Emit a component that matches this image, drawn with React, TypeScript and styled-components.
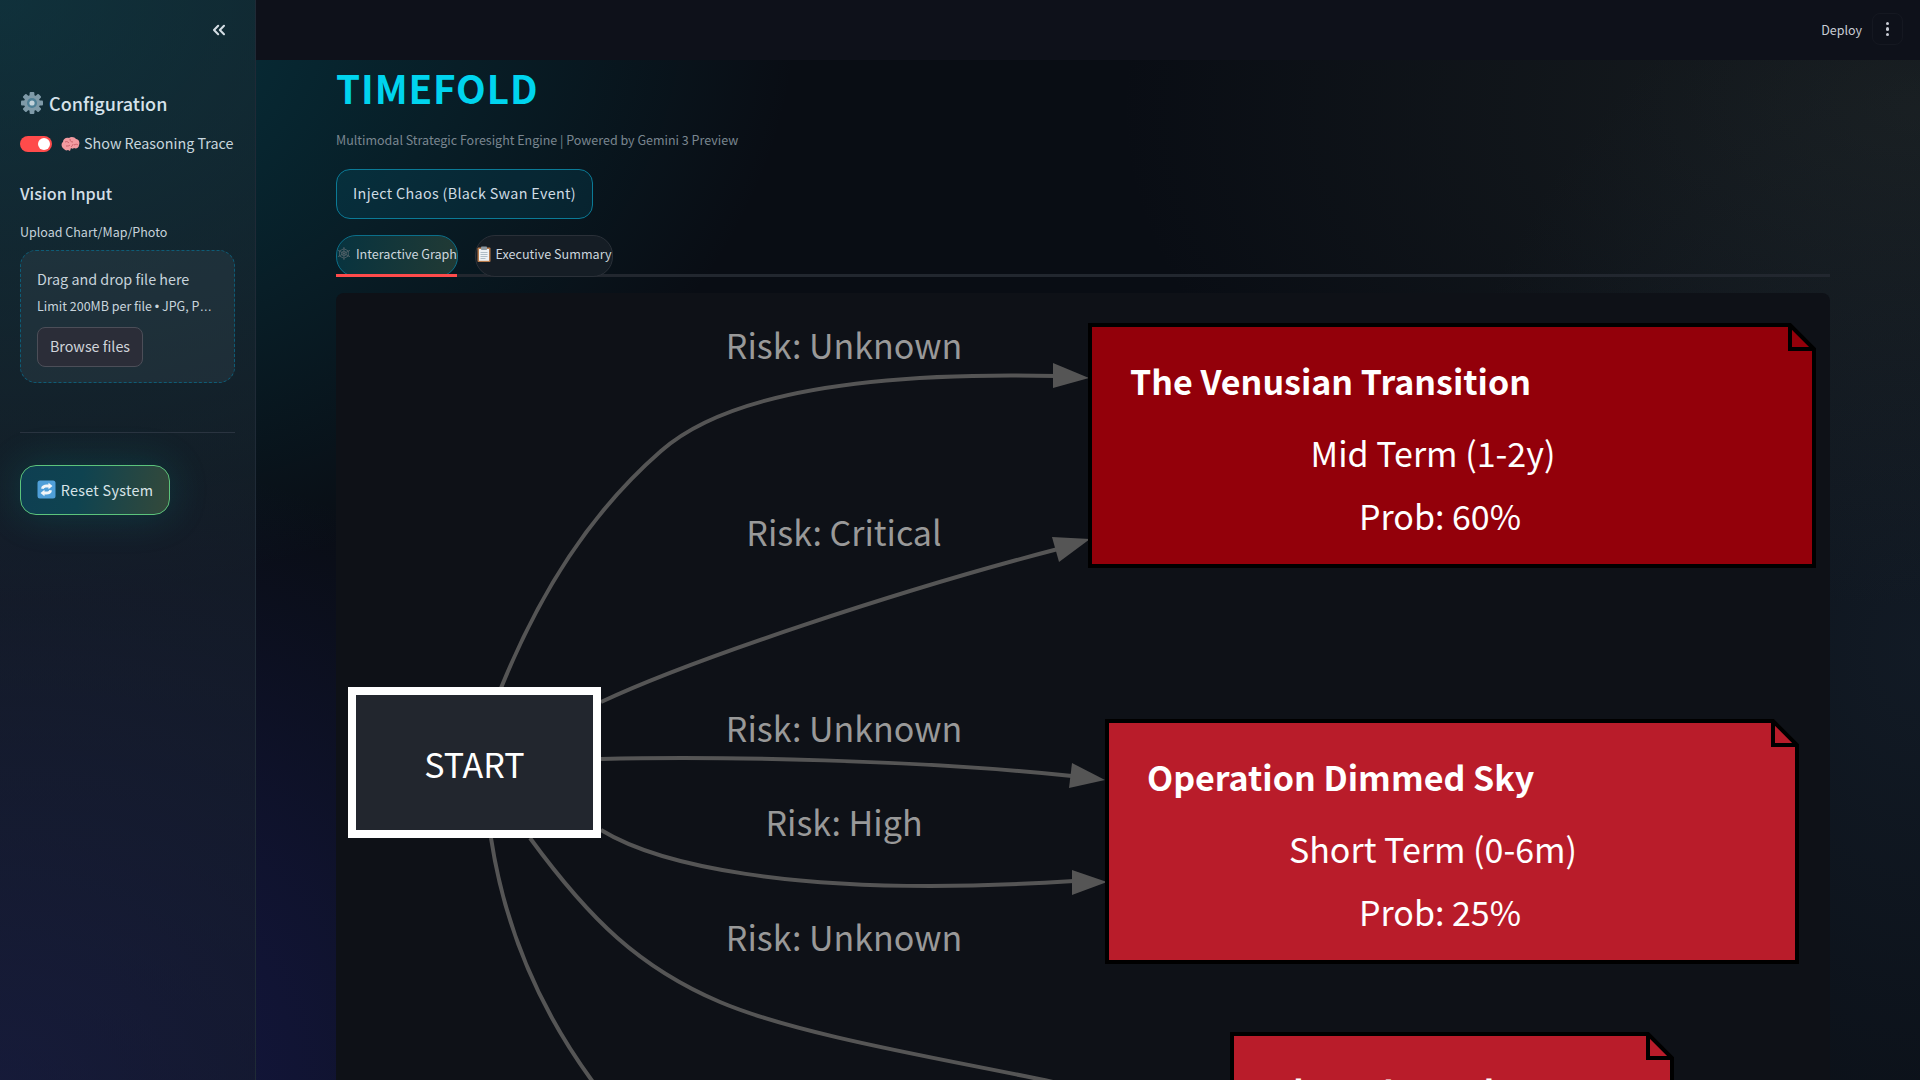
import React from "react";
import styled, { createGlobalStyle } from "styled-components";
import { ChevronsLeft } from "lucide-react";

const Global = createGlobalStyle`
  html, body { margin: 0; padding: 0; height: 100%; overflow: hidden; }
  body {
    font-family: "Noto Sans CJK SC", "Noto Sans", sans-serif;
    background-color: #090d14;
    background-image:
      radial-gradient(ellipse 800px 600px at 0% 0%, rgba(0, 120, 140, 0.38), transparent 100%),
      radial-gradient(ellipse 760px 640px at 0% 100%, rgba(45, 45, 165, 0.36), transparent 100%),
      radial-gradient(ellipse 800px 500px at 100% 10%, rgba(70, 80, 70, 0.24), transparent 100%),
      radial-gradient(ellipse 500px 700px at 100% 60%, rgba(40, 60, 80, 0.28), transparent 100%);
  }
  * { box-sizing: border-box; }
`;

const Shell = styled.div`
  display: flex;
  height: 100vh;
  overflow: hidden;
`;

const Sidebar = styled.aside`
  width: 256px;
  flex: none;
  padding: 0 20px;
  display: flex;
  flex-direction: column;
  border-right: 1px solid #1f2a36;
  background: linear-gradient(180deg, rgba(26, 44, 52, 0.5) 0%, rgba(28, 40, 50, 0.55) 35%, rgba(22, 28, 44, 0.55) 100%);
`;

const CollapseRow = styled.div`
  height: 60px;
  display: flex;
  align-items: center;
  justify-content: flex-end;
  padding-right: 6px;
  color: #d4dde4;
  margin-bottom: 26px;
`;

const SideTitle = styled.h2`
  margin: 0;
  display: flex;
  align-items: center;
  gap: 5px;
  height: 34px;
  font-size: 18px;
  line-height: 32px;
  font-weight: 500;
  color: #d6e2ea;
`;

const ToggleRow = styled.div`
  margin-top: 12px;
  height: 24px;
  display: flex;
  align-items: center;
  font-size: 14.350px;
  line-height: 22px;
  white-space: nowrap;
  color: #c8d6de;
`;

const ToggleText = styled.span`
  margin-bottom: 2px;
`;

const Toggle = styled.span`
  width: 32px;
  height: 16px;
  border-radius: 8px;
  background: #ff4b4b;
  display: flex;
  align-items: center;
  justify-content: flex-end;
  padding-right: 2px;
  margin-right: 9px;
`;

const Knob = styled.span`
  width: 12px;
  height: 12px;
  border-radius: 50%;
  background: #fff;
`;

const SectionTitle = styled.h3`
  margin: 24px 0 0;
  font-size: 16.200px;
  line-height: 26px;
  height: 28px;
  font-weight: 500;
  color: #d2dee6;
`;

const FieldLabel = styled.div`
  margin-top: 14px;
  font-size: 12.500px;
  line-height: 19px;
  height: 20px;
  color: #c6d2da;
`;

const Dropzone = styled.div`
  margin-top: 8px;
  width: 215px;
  height: 133px;
  padding: 16px 16px 0 16px;
  border: 1px dashed #0e5c76;
  border-radius: 16px;
  background: rgba(60, 80, 90, 0.28);
  color: #c8d4dc;
`;

const DropHeading = styled.div`
  font-size: 14.350px;
  line-height: 23px;
  height: 24px;
`;

const DropHint = styled.div`
  margin-top: 5px;
  font-size: 12.500px;
  line-height: 19px;
  height: 20px;
  white-space: nowrap;
`;

const LatinMark = styled.span`
  font-family: "Liberation Sans", sans-serif;
`;

const BrowseButton = styled.div`
  margin-top: 11px;
  width: 106px;
  height: 40px;
  border: 1px solid #4c4e58;
  border-radius: 8px;
  background: #2b2d38;
  font-size: 14.350px;
  line-height: 36px;
  text-align: center;
  color: #d0d4da;
`;

const Divider = styled.hr`
  margin: 49px 0 32px;
  border: 0;
  border-top: 1px solid #2a3440;
  width: 215px;
`;

const ResetButton = styled.div`
  width: 150px;
  height: 50px;
  padding-bottom: 2px;
  border: 1px solid #5cc47c;
  border-radius: 16px;
  display: flex;
  align-items: center;
  justify-content: center;
  gap: 5px;
  font-size: 14.350px;
  letter-spacing: 0.300px;
  color: #d8e4e8;
  background: linear-gradient(100deg, #0e3f52 0%, #0f4350 40%, #34493a 100%);
  box-shadow: 0 0 40px rgba(0, 180, 170, 0.2);
`;

const Main = styled.main`
  flex: 1;
  min-width: 0;
  display: flex;
  flex-direction: column;
`;

const Header = styled.header`
  height: 60px;
  flex: none;
  padding: 0 17px 2px 0;
  background: #0e111a;
  display: flex;
  align-items: center;
  justify-content: flex-end;
  font-size: 12.500px;
  color: #c8ccd4;
`;

const KebabButton = styled.div`
  width: 31px;
  height: 32px;
  margin-left: 10px;
  border: 1px solid #151821;
  border-radius: 8px;
  display: flex;
  flex-direction: column;
  align-items: center;
  justify-content: center;
  gap: 2px;
`;

const Dot = styled.span`
  width: 3.500px;
  height: 3.500px;
  border-radius: 50%;
  background: #c8ccd4;
`;

const Content = styled.div`
  flex: 1;
  min-height: 0;
  padding: 0 90px 0 80px;
  display: flex;
  flex-direction: column;
`;

const Title = styled.h1`
  margin: 0;
  height: 56px;
  font-size: 38.600px;
  line-height: 54px;
  font-weight: 700;
  letter-spacing: 0.900px;
  color: #00d4ee;
`;

const Subtitle = styled.div`
  margin-top: 14px;
  font-size: 12.500px;
  line-height: 20px;
  color: #7a8690;
`;

const ChaosButton = styled.div`
  margin-top: 19px;
  width: 257px;
  height: 50px;
  border: 1px solid #0b7a96;
  border-radius: 14px;
  background: rgba(0, 150, 190, 0.12);
  font-size: 14.350px;
  letter-spacing: 0.330px;
  line-height: 46px;
  text-align: center;
  color: #d0dce4;
`;

const TabBar = styled.div`
  margin-top: 16px;
  height: 42px;
  display: flex;
  gap: 17px;
  border-bottom: 3px solid #22272f;
`;

const Tab = styled.div<{ $active?: boolean }>`
  height: 42px;
  width: ${(p) => (p.$active ? "122px" : "138px")};
  padding-bottom: 5px;
  border-radius: 20px;
  border: 1px solid ${(p) => (p.$active ? "#0b6f8a" : "#2a3038")};
  background: ${(p) => (p.$active ? "linear-gradient(100deg, #07333f, #223a34)" : "#151d25")};
  display: flex;
  align-items: center;
  justify-content: center;
  gap: 5px;
  font-size: 12.600px;
  white-space: nowrap;
  color: #ccd6de;
  position: relative;
  &::after {
    content: "";
    display: ${(p) => (p.$active ? "block" : "none")};
    position: absolute;
    left: -1px;
    right: 0;
    bottom: -1px;
    height: 3px;
    background: #ff4b4b;
  }
`;

const GraphCard = styled.div`
  margin-top: 16px;
  flex: 1;
  min-height: 0;
  border-radius: 8px 8px 0 0;
  background: #0e1117;
  overflow: hidden;
`;

const GraphSvg = styled.svg`
  display: block;
  font-family: "Noto Sans CJK SC", "Noto Sans", sans-serif;
`;

const EdgeLabel = styled.text`
  font-size: 34px;
  fill: #999;
  text-anchor: middle;
`;

const NodeHeading = styled.text`
  font-size: 34px;
  font-weight: 700;
  fill: #fff;
`;

const NodeLine = styled.text`
  font-size: 34px;
  fill: #fff;
  text-anchor: middle;
`;

const Gear = () => (
  <svg width="24" height="24" viewBox="0 0 24 24">
    <g fill="#7f9aa8">
      {[0, 45, 90, 135, 180, 225, 270, 315].map((a) => (
        <rect key={a} x="9.600" y="1" width="4.800" height="6" rx="1" transform={`rotate(${a} 12 12)`} />
      ))}
      <circle cx="12" cy="12" r="8" />
    </g>
    <circle cx="12" cy="12" r="5" fill="#4e7f95" />
    <circle cx="12" cy="12" r="2.600" fill="#c2d2da" />
  </svg>
);

const Brain = () => (
  <svg width="19" height="16" viewBox="0 0 19 16" style={{ marginRight: 4 }}>
    <path d="M3 13C0 11 0 7 2 6 2 3 5 1 8 2c2-2 6-1 7 1 3 0 4 4 3 6 0 3-3 4-5 3-1 1-2 1-3 0l-1 3-2-1c-2 1-3 0-4-1z" fill="#f29aa0" />
    <path d="M4 6c2-1 3 0 4 1M9 3c0 2 1 3 3 3M13 9c2-1 3-1 4 0M5 10c2 0 3 0 4-1M10 11c1-1 2-2 2-3" stroke="#c9606a" strokeWidth="1" fill="none" />
  </svg>
);

const Refresh = () => (
  <svg width="19" height="19" viewBox="0 0 19 19">
    <rect x="0.500" y="0.500" width="18" height="18" rx="2.500" fill="#4f9fd8" />
    <path d="M4 8.500C4.500 5.500 7 4.500 9.500 4.500h2V2.800L15.500 6l-4 3.200V7.500h-2C8 7.500 7 8 6.700 9z" fill="#f2f6f8" />
    <path d="M15 10.500c-.5 3-3 4-5.500 4h-2v1.700L3.500 13l4-3.200v1.700h2c1.500 0 2.500-.5 2.800-1.500z" fill="#f2f6f8" />
  </svg>
);

const Web = () => (
  <svg width="15" height="15" viewBox="0 0 16 16" fill="none" stroke="#59666c" strokeWidth="0.900">
    <path d="M8 0.500V15.500M1 4.300L15 11.700M1 11.700L15 4.300" />
    <path d="M8 2.500L13 5 13 11 8 13.500 3 11 3 5zM8 5.200L10.600 6.500V9.500L8 10.800 5.400 9.500V6.500z" />
  </svg>
);

const Clipboard = () => (
  <svg width="14" height="16" viewBox="0 0 14 16">
    <rect x="0.500" y="1.500" width="13" height="14.500" rx="1" fill="#b5794a" />
    <rect x="2" y="3" width="10" height="11.800" fill="#eef2f4" />
    <rect x="4" y="0.500" width="6" height="3.500" rx="0.800" fill="#8f9aa3" />
    <path d="M3.500 6.500h7M3.500 8.500h7M3.500 10.500h7M3.500 12.500h5" stroke="#9fb0bb" strokeWidth="0.800" />
  </svg>
);

type NodeProps = {
  x: number; y: number; r: number; b: number; fill: string;
  title: string; titleY?: number; line1?: string; line1x?: number; line2?: string;
};

const Note = ({ x, y, r, b, fill, title, titleY = 70, line1, line1x, line2 }: NodeProps) => (
  <g>
    <path
      d={`M${x} ${y}H${r - 24}L${r} ${y + 24}V${b}H${x}Z`}
      fill={fill}
      stroke="#000"
      strokeWidth="4"
    />
    <path d={`M${r - 24} ${y}V${y + 24}H${r}`} fill="none" stroke="#000" strokeWidth="4" />
    <NodeHeading x={x + 40} y={y + titleY}>{title}</NodeHeading>
    {line1 && <NodeLine x={line1x} y={y + 142}>{line1}</NodeLine>}
    {line2 && <NodeLine x={1440} y={y + 205}>{line2}</NodeLine>}
  </g>
);

const edges = [
  "M501 688C540 592 590 513 661 451C730 390 880 372 1056 376",
  "M601 702C690 660 900 590 1058 549",
  "M601 759C720 756 920 760 1072 776",
  "M601 830C650 860 780 900 1074 881",
  "M530 838C590 920 640 968 720 1002C800 1036 950 1060 1053 1082",
  "M491 838C505 930 540 1010 593 1082",
];

const heads = [
  "1053,363 1089,378 1053,388",
  "1052,537 1090,539 1059,562",
  "1072,763 1105,780 1069,788",
  "1072,870 1107,882 1072,895",
];

export default function App() {
  return (
    <>
      <Global />
      <Shell>
        <Sidebar>
          <CollapseRow>
            <ChevronsLeft size={20} strokeWidth={2.500} />
          </CollapseRow>
          <SideTitle><Gear />Configuration</SideTitle>
          <ToggleRow>
            <Toggle><Knob /></Toggle>
            <Brain />
            <ToggleText>Show Reasoning Trace</ToggleText>
          </ToggleRow>
          <SectionTitle>Vision Input</SectionTitle>
          <FieldLabel>Upload Chart/Map/Photo</FieldLabel>
          <Dropzone>
            <DropHeading>Drag and drop file here</DropHeading>
            <DropHint>Limit 200MB per file <LatinMark>•</LatinMark> JPG, P<LatinMark>…</LatinMark></DropHint>
            <BrowseButton>Browse files</BrowseButton>
          </Dropzone>
          <Divider />
          <ResetButton><Refresh />Reset System</ResetButton>
        </Sidebar>
        <Main>
          <Header>
            Deploy
            <KebabButton><Dot /><Dot /><Dot /></KebabButton>
          </Header>
          <Content>
            <Title>TIMEFOLD</Title>
            <Subtitle>Multimodal Strategic Foresight Engine | Powered by Gemini 3 Preview</Subtitle>
            <ChaosButton>Inject Chaos (Black Swan Event)</ChaosButton>
            <TabBar>
              <Tab $active><Web />Interactive Graph</Tab>
              <Tab><Clipboard />Executive Summary</Tab>
            </TabBar>
            <GraphCard>
              <GraphSvg width="1494" height="800" viewBox="336 293 1494 800">
                {edges.map((d) => (
                  <path key={d} d={d} fill="none" stroke="#555" strokeWidth="4" />
                ))}
                {heads.map((p) => (
                  <polygon key={p} points={p} fill="#555" />
                ))}
                <EdgeLabel x="844" y="359">Risk: Unknown</EdgeLabel>
                <EdgeLabel x="844" y="546">Risk: Critical</EdgeLabel>
                <EdgeLabel x="844" y="742">Risk: Unknown</EdgeLabel>
                <EdgeLabel x="844" y="836">Risk: High</EdgeLabel>
                <EdgeLabel x="844" y="951">Risk: Unknown</EdgeLabel>
                <rect x="352" y="691" width="245" height="143" fill="#22262e" stroke="#fff" strokeWidth="8" />
                <NodeLine x="474.500" y="778">START</NodeLine>
                <Note x={1090} y={325} r={1814} b={566} fill="#93000a" title="The Venusian Transition" line1="Mid Term (1-2y)" line1x={1433} line2="Prob: 60%" />
                <Note x={1107} y={721} r={1797} b={962} fill="#b91c2a" title="Operation Dimmed Sky" line1="Short Term (0-6m)" line1x={1433} line2="Prob: 25%" />
                <Note x={1232} y={1034} r={1672} b={1274} fill="#b91c2a" title="Slow Shares lost" titleY={72} />
              </GraphSvg>
            </GraphCard>
          </Content>
        </Main>
      </Shell>
    </>
  );
}
